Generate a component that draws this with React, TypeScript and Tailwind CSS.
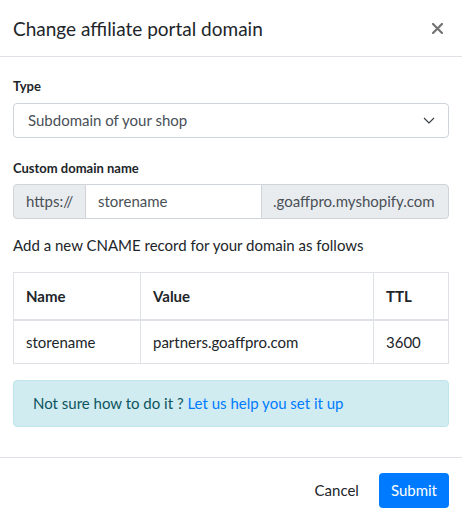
function CloseIcon() {
  return (
    <svg width="11" height="11" viewBox="0 0 11 11" className="text-[#737373]">
      <path d="M1 1 L10 10 M10 1 L1 10" stroke="currentColor" strokeWidth="2.2" strokeLinecap="square" />
    </svg>
  )
}

function Chevron() {
  return (
    <svg width="12" height="7" viewBox="0 0 12 7" className="text-[#343a40]">
      <path d="M1 1 L6 6 L11 1" fill="none" stroke="currentColor" strokeWidth="1.1" />
    </svg>
  )
}

export default function App() {
  return (
    <div
      className="w-[462px] bg-white text-[15px] text-[#212529]"
      style={{ fontFamily: "Lato, 'Open Sans', sans-serif" }}
    >
      {/* header */}
      <div className="flex h-[57px] items-center justify-between border-b border-[#dee2e6] pl-[13px] pr-[15px]">
        <h5 className="text-[19px] leading-[23px] text-[#212529]">Change affiliate portal domain</h5>
        <button className="flex h-[20px] w-[20px] items-center justify-center">
          <CloseIcon />
        </button>
      </div>

      {/* body */}
      <div className="px-[13px] pt-[19px]">
        <label className="mb-[6px] block h-[21px] text-[13px] font-bold leading-[21px]">Type</label>
        <div className="mb-[20px] flex h-[35px] items-center justify-between rounded-[4px] border border-[#ced4da] pl-[14px] pr-[13px] text-[#495057]">
          <span>Subdomain of your shop</span>
          <Chevron />
        </div>

        <label className="mb-[5px] block h-[21px] text-[13px] font-bold leading-[21px]">Custom domain name</label>
        <div className="flex h-[35px] text-[#495057]">
          <div className="flex w-[73px] items-center rounded-l-[4px] border border-[#ced4da] bg-[#e9ecef] pl-[12px]">
            https://
          </div>
          <div className="flex flex-1 items-center border-y border-[#ced4da] pl-[12px]">storename</div>
          <div className="flex w-[188px] items-center rounded-r-[4px] border border-[#ced4da] bg-[#e9ecef] pl-[11px]">
            .goaffpro.myshopify.com
          </div>
        </div>

        <p className="mb-[16px] mt-[15px] leading-[22px]">Add a new CNAME record for your domain as follows</p>

        <table className="w-full border-collapse text-left">
          <thead>
            <tr className="h-[47px]">
              <th className="w-[127px] border border-b-2 border-[#dee2e6] px-[12px] font-bold">Name</th>
              <th className="w-[233px] border border-b-2 border-[#dee2e6] px-[12px] font-bold">Value</th>
              <th className="border border-b-2 border-[#dee2e6] px-[12px] font-bold">TTL</th>
            </tr>
          </thead>
          <tbody>
            <tr className="h-[44px]">
              <td className="border border-[#dee2e6] px-[12px]">storename</td>
              <td className="border border-[#dee2e6] px-[12px]">partners.goaffpro.com</td>
              <td className="border border-[#dee2e6] px-[12px]">3600</td>
            </tr>
          </tbody>
        </table>

        <div className="mt-[16px] flex h-[47px] items-center rounded-[4px] border border-[#bee5eb] bg-[#d1ecf1] px-[19px] text-[#0c5460]">
          <span>
            Not sure how to do it ?{" "}
            <a href="#" className="text-[#007bff]">
              Let us help you set it up
            </a>
          </span>
        </div>
      </div>

      {/* footer */}
      <div className="mt-[30px] flex items-center justify-end gap-[8px] border-t border-[#dee2e6] px-[13px] pb-[13px] pt-[15px]">
        <button className="h-[35px] px-[12px] text-[#212529]">Cancel</button>
        <button className="h-[35px] rounded-[4px] bg-[#007bff] px-[12px] text-white">Submit</button>
      </div>
    </div>
  )
}
